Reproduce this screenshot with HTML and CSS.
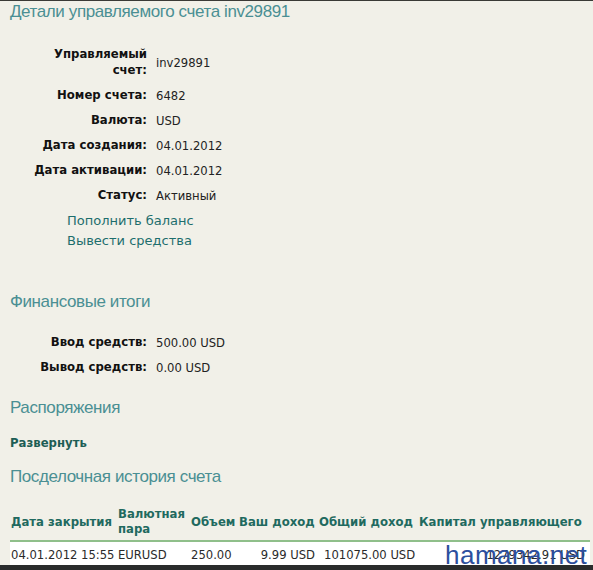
FILE: index.html
```html
<!DOCTYPE html>
<html>
<head>
<meta charset="utf-8">
<link rel="stylesheet" href="styles.css">
</head>
<body>
<div class="page">
  <h1 class="title">Детали управляемого счета inv29891</h1>
  <div class="details">
    <div class="lbl">Управляемый<br>счет:</div><div class="val">inv29891</div>
    <div class="lbl">Номер счета:</div><div class="val">6482</div>
    <div class="lbl">Валюта:</div><div class="val">USD</div>
    <div class="lbl">Дата создания:</div><div class="val">04.01.2012</div>
    <div class="lbl">Дата активации:</div><div class="val">04.01.2012</div>
    <div class="lbl">Статус:</div><div class="val">Активный</div>
  </div>
  <div class="links">
    <a class="link">Пополнить баланс</a>
    <a class="link">Вывести средства</a>
  </div>

  <h2 class="heading fin">Финансовые итоги</h2>
  <div class="details">
    <div class="lbl">Ввод средств:</div><div class="val">500.00 USD</div>
    <div class="lbl">Вывод средств:</div><div class="val">0.00 USD</div>
  </div>

  <h2 class="heading ord">Распоряжения</h2>
  <a class="expand">Развернуть</a>

  <h2 class="heading hist">Посделочная история счета</h2>
  <table class="trades">
    <colgroup>
      <col class="w1"><col class="w2"><col class="w3"><col class="w4"><col class="w5"><col class="w6">
    </colgroup>
    <thead>
      <tr>
        <th>Дата закрытия</th>
        <th>Валютная<br>пара</th>
        <th>Объем</th>
        <th>Ваш доход</th>
        <th>Общий доход</th>
        <th>Капитал управляющего</th>
      </tr>
    </thead>
    <tbody>
      <tr>
        <td>04.01.2012 15:55</td>
        <td>EURUSD</td>
        <td>250.00</td>
        <td class="r">9.99 USD</td>
        <td class="pl">101075.00 USD</td>
        <td class="r">1279342.91 USD</td>
      </tr>
    </tbody>
  </table>
</div>
<div class="watermark">hamana.net</div>
<div class="bottombar"></div>
</body>
</html>
```
FILE: styles.css
```css
html, body {
  margin: 0;
  padding: 0;
}
body {
  background: #f1f0e8;
  border-top: 1px solid #3a3a36;
  width: 593px;
  height: 569px;
  position: relative;
  overflow: hidden;
  font-family: "DejaVu Sans", Verdana, sans-serif;
  font-size: 11.6px;
  color: #1a1a1a;
}
.page {
  padding: 0 3px 0 10px;
}
.title, .heading {
  font-family: "Liberation Sans", Arial, sans-serif;
  font-weight: normal;
  color: #4a8f93;
  font-size: 17px;
  letter-spacing: -0.4px;
  margin: 0;
  line-height: 22px;
}
.title {
  margin-top: 0;
}
.details {
  display: grid;
  grid-template-columns: 137px auto;
  column-gap: 9px;
  align-items: center;
  margin-top: 19px;
}
.details .lbl {
  font-weight: bold;
  font-size: 11.7px;
  text-align: right;
  line-height: 16px;
  padding: 4px 0 5px;
  color: #111;
}
.details .val {
  color: #222;
}
.links {
  display: flex;
  flex-direction: column;
  padding-left: 57px;
  margin-top: 3px;
}
.link {
  font-size: 13px;
  color: #1d6e6d;
  line-height: 20px;
}
.fin { margin-top: 40px; }
.fin + .details { margin-top: 17px; }
.ord { margin-top: 17px; }
.expand {
  display: block;
  font-weight: bold;
  font-size: 11.7px;
  color: #1d5e55;
  margin-top: 17px;
  line-height: 14px;
}
.hist { margin-top: 16px; }
.trades {
  border-collapse: collapse;
  table-layout: fixed;
  margin-top: 19px;
  width: 580px;
}
.w1 { width: 107px; }
.w2 { width: 73px; }
.w3 { width: 48px; }
.w4 { width: 80px; }
.w5 { width: 100px; }
.w6 { width: 172px; }
.trades th {
  font-weight: bold;
  font-size: 11.7px;
  color: #1f6a5f;
  text-align: left;
  line-height: 15px;
  padding: 0 0 3px 1px;
  border-bottom: 2px solid #8fbf8a;
  vertical-align: middle;
  white-space: nowrap;
}
.trades td {
  background: #ffffff;
  color: #2a2a2a;
  line-height: 14px;
  padding: 6px 0 5px 1px;
  white-space: nowrap;
}
.trades td.r { text-align: right; padding-right: 3px; }
.trades td:last-child { padding-right: 5px; }
.trades td.pl { padding-left: 6px; }
.bottombar {
  position: absolute;
  left: 0;
  right: 0;
  bottom: 0;
  height: 5px;
  background: #2a2c2c;
}
.watermark {
  position: absolute;
  left: 445px;
  top: 540px;
  font-family: "Liberation Sans", Arial, sans-serif;
  font-size: 26px;
  color: #2c4f9e;
  line-height: 28px;
  letter-spacing: 0.5px;
}
```
